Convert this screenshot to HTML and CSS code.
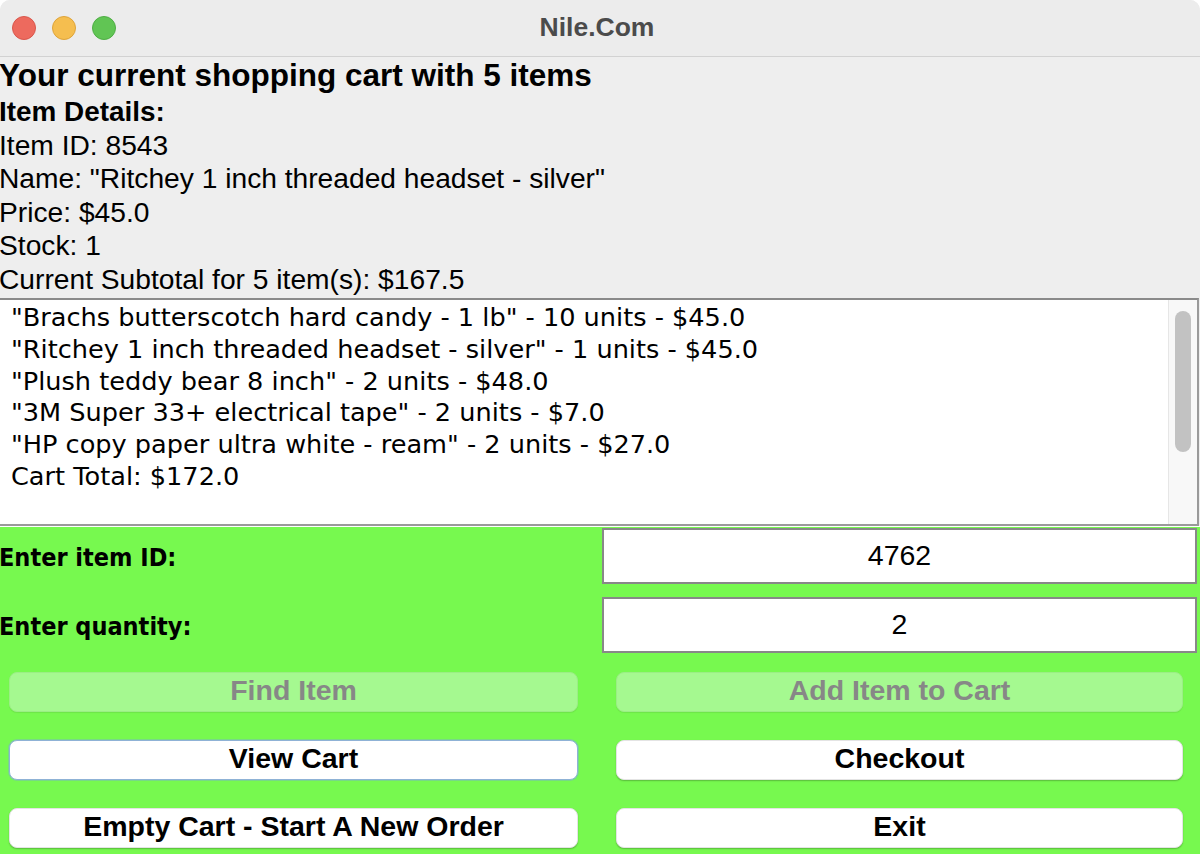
FILE: index.html
```html
<!DOCTYPE html>
<html>
<head>
<meta charset="utf-8">
<title>Nile.Com</title>
<link rel="stylesheet" href="styles.css">
</head>
<body>
<div class="window">
  <div class="titlebar">
    <div class="lights">
      <span class="light red"></span>
      <span class="light yellow"></span>
      <span class="light green"></span>
    </div>
    <div class="title">Nile.Com</div>
  </div>
  <div class="info">
    <div class="heading">Your current shopping cart with 5 items</div>
    <div class="line bold">Item Details:</div>
    <div class="line">Item ID: 8543</div>
    <div class="line">Name: "Ritchey 1 inch threaded headset - silver"</div>
    <div class="line">Price: $45.0</div>
    <div class="line">Stock: 1</div>
    <div class="line">Current Subtotal for 5 item(s): $167.5</div>
  </div>
  <div class="scrollpane">
    <div class="textarea">
      <div class="tline">"Brachs butterscotch hard candy - 1 lb" - 10 units - $45.0</div>
      <div class="tline">"Ritchey 1 inch threaded headset - silver" - 1 units - $45.0</div>
      <div class="tline">"Plush teddy bear 8 inch" - 2 units - $48.0</div>
      <div class="tline">"3M Super 33+ electrical tape" - 2 units - $7.0</div>
      <div class="tline">"HP copy paper ultra white - ream" - 2 units - $27.0</div>
      <div class="tline">Cart Total: $172.0</div>
    </div>
    <div class="scrollbar"><div class="thumb"></div></div>
  </div>
  <div class="controls">
    <div class="fields">
      <div class="label">Enter item ID:</div>
      <div class="field">4762</div>
      <div class="label">Enter quantity:</div>
      <div class="field">2</div>
    </div>
    <div class="buttons">
      <div class="btn left disabled">Find Item</div>
      <div class="btn right disabled">Add Item to Cart</div>
      <div class="btn left focused">View Cart</div>
      <div class="btn right">Checkout</div>
      <div class="btn left">Empty Cart - Start A New Order</div>
      <div class="btn right">Exit</div>
    </div>
  </div>
</div>
</body>
</html>
```
FILE: styles.css
```css
* { box-sizing: border-box; }
html, body { margin: 0; padding: 0; background: #ffffff; }
body { width: 1200px; height: 854px; overflow: hidden; font-family: "Liberation Sans", Arial, sans-serif; }

.window {
  width: 1200px;
  height: 854px;
  display: flex;
  flex-direction: column;
  background: #eeeeee;
  border-radius: 10px 10px 0 0;
  overflow: hidden;
}

.titlebar {
  height: 57px;
  flex: none;
  background: #ececec;
  border-bottom: 1px solid #d2d2d2;
  position: relative;
  display: flex;
  align-items: center;
  justify-content: center;
}
.lights {
  position: absolute;
  left: 12px;
  top: 16px;
  display: flex;
  gap: 16px;
}
.light { width: 24px; height: 24px; border-radius: 50%; display: block; }
.light.red { background: #ed6a5e; border: 1px solid #d9574c; }
.light.yellow { background: #f5be4f; border: 1px solid #dea43a; }
.light.green { background: #61c554; border: 1px solid #4fae45; }
.title {
  font-weight: bold;
  font-size: 26.5px;
  color: #4b4b4b;
  margin-left: -6px;
  margin-top: -2px;
}

.info {
  flex: none;
  height: 241px;
  background: #eeeeee;
  color: #000;
  margin-left: -1px;
}
.heading {
  font-weight: bold;
  font-size: 31.5px;
  height: 38px;
  line-height: 37px;
  white-space: nowrap;
}
.line {
  font-size: 28.2px;
  height: 33.6px;
  line-height: 33.6px;
  white-space: nowrap;
}
.line.bold { font-weight: bold; font-size: 27.9px; }

.scrollpane {
  flex: none;
  height: 228px;
  width: 1199px;
  border-top: 2px solid #8a8a8a;
  border-right: 2px solid #9a9a9a;
  border-bottom: 2px solid #9a9a9a;
  background: #ffffff;
  display: flex;
}
.textarea {
  flex: 1;
  padding: 2px 0 0 11px;
  font-family: "DejaVu Sans", sans-serif;
  font-size: 25.6px;
  color: #000;
  overflow: hidden;
}
.tline {
  height: 31.8px;
  line-height: 31.8px;
  white-space: nowrap;
}
.scrollbar {
  width: 29px;
  flex: none;
  background: #f8f8f8;
  border-left: 1px solid #e6e6e6;
  padding: 11px 0 0 6px;
}
.thumb {
  width: 16px;
  height: 141px;
  border-radius: 8px;
  background: #c2c2c2;
}

.controls {
  flex: 1;
  background: #77f94f;
  padding: 1px 3px 0 0;
  border-top: 1px solid #ffffff;
}
.fields {
  display: grid;
  grid-template-columns: 602px 595px;
  grid-auto-rows: 56px;
  row-gap: 13px;
}
.label {
  display: flex;
  align-items: center;
  font-family: "DejaVu Sans Condensed", "DejaVu Sans", sans-serif;
  font-stretch: condensed;
  font-weight: bold;
  font-size: 25px;
  color: #000;
  padding-top: 2px;
  margin-left: -1px;
  white-space: nowrap;
}
.field {
  background: #ffffff;
  border: 2px solid #888888;
  display: flex;
  align-items: center;
  justify-content: center;
  font-size: 28.5px;
  color: #000;
  padding-bottom: 1px;
}
.buttons {
  margin-top: 19px;
  display: grid;
  grid-template-columns: 602px 595px;
  grid-auto-rows: 40px;
  row-gap: 28px;
}
.btn {
  background: #ffffff;
  border-radius: 8px;
  display: flex;
  align-items: center;
  justify-content: center;
  font-weight: bold;
  font-size: 28.5px;
  color: #000;
  box-shadow: 0 1px 1.5px rgba(0, 0, 0, 0.25);
  border: 1px solid #e4e4e4;
  white-space: nowrap;
  padding-bottom: 3px;
}
.btn.left { margin: 0 24px 0 9px; }
.btn.right { margin: 0 14px 0 14px; }
.btn.disabled {
  background: #a5f990;
  color: #878787;
  border-color: #9bee85;
  box-shadow: 0 1px 1px rgba(0, 0, 0, 0.08);
}
.btn.focused {
  border: 1.5px solid #8fb2d6;
  box-shadow: 0 0 0 1px rgba(120, 170, 220, 0.4);
}
```
